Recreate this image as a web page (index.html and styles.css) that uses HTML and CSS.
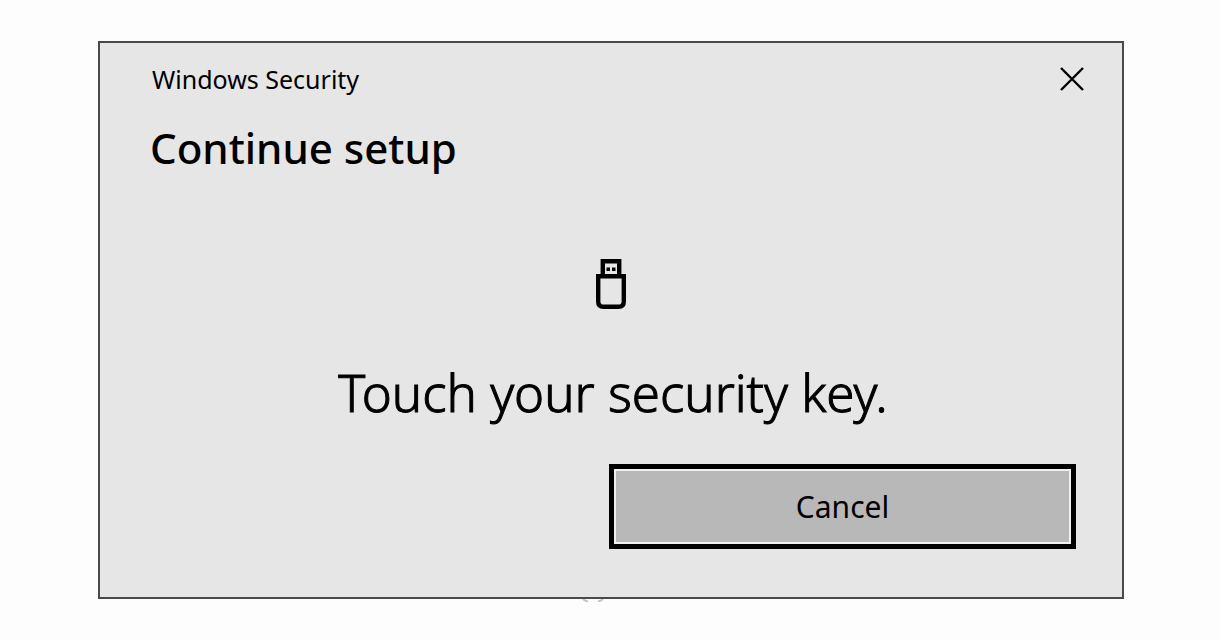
FILE: index.html
```html
<!DOCTYPE html>
<html lang="en">
<head>
<meta charset="utf-8">
<title>Windows Security</title>
<link rel="stylesheet" href="styles.css">
</head>
<body>
<main class="dialog" role="dialog" aria-labelledby="heading">
  <header class="titlebar">
    <span class="app-name">Windows Security</span>
    <button class="close" type="button" aria-label="Close">
      <svg width="24" height="24" viewBox="0 0 24 24" aria-hidden="true"><path d="M1 1L23 23M23 1L1 23" stroke="#000" stroke-width="2.4" fill="none"/></svg>
    </button>
  </header>
  <h1 class="heading" id="heading">Continue setup</h1>
  <section class="prompt">
    <svg class="key" width="30" height="50" viewBox="0 0 30 50" aria-hidden="true">
      <path d="M6.8 17V2.2H23.2V17M2.2 17.2H27.8V42.5Q27.8 47.8 22.5 47.8H7.5Q2.2 47.8 2.2 42.5Z" fill="none" stroke="#000" stroke-width="4.4"/>
      <path d="M10.5 8.5h3.5v3.5h-3.5zM16 8.5h3.5v3.5h-3.5z"/>
    </svg>
    <p class="message">Touch your security key.</p>
  </section>
  <footer class="actions">
    <button class="cancel" type="button">Cancel</button>
  </footer>
  <svg class="edge-mark" width="22" height="3" viewBox="0 0 22 3" aria-hidden="true"><path d="M1 0Q3 2 6 2.5M21 0Q19 2 16 2.5" fill="none" stroke="#c4c4c4" stroke-width="2"/></svg>
</main>
</body>
</html>
```
FILE: styles.css
```css
* {
  box-sizing: border-box;
}

body {
  margin: 0;
  padding: 41px 96px 41px 98px;
  background: #fdfdfd;
  color: #000;
  font-family: "Segoe UI", "Noto Sans", "Open Sans", sans-serif;
}

.dialog {
  position: relative;
  padding: 16px 46px 48px 50px;
  border: 2px solid #4a4a4a;
  background: #e6e6e6;
}

.titlebar {
  display: flex;
  align-items: center;
  justify-content: space-between;
  height: 40px;
}

.app-name {
  padding-left: 2px;
  font-size: 25px;
  line-height: 34px;
}

.close {
  display: flex;
  align-items: center;
  justify-content: center;
  width: 48px;
  height: 40px;
  margin-right: -20px;
  padding: 0;
  border: 0;
  background: none;
}

.heading {
  margin: 20px 0 0;
  font-size: 42px;
  font-weight: 500;
  line-height: 58px;
}

.prompt {
  display: flex;
  flex-direction: column;
  align-items: center;
  gap: 48px;
  margin-right: 4px;
  padding: 82px 0 37px;
}

.message {
  margin: 0;
  padding-left: 4px;
  font-size: 51px;
  font-weight: 300;
  line-height: 70px;
  -webkit-text-stroke: 1px #000;
}

.actions {
  display: grid;
  grid-template-columns: 1fr 1fr;
  column-gap: 8px;
  margin-left: -16px;
}

.cancel {
  grid-column: 2;
  height: 85px;
  border: 5px solid #000;
  background: #b8b8b8;
  box-shadow: inset 0 0 0 2px #f0f0f0;
  color: #000;
  font-family: inherit;
  font-size: 30px;
}

.edge-mark {
  position: absolute;
  bottom: -5px;
  left: 482px;
}
```
